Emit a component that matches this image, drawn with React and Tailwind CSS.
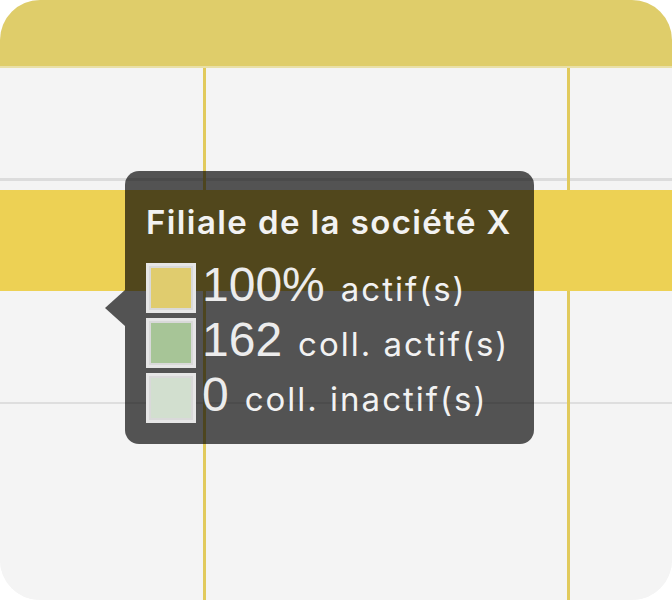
import React from "react";

function Cells({ h, bg = "bg-[#f4f4f4]" }) {
  return (
    <div className={`flex w-full ${h} ${bg}`}>
      <div className="w-[203px] shrink-0" />
      <div className="w-[3px] shrink-0 bg-[#e1ca5c]" />
      <div className="w-[361px] shrink-0" />
      <div className="w-[3px] shrink-0 bg-[#e1ca5c]" />
      <div className="flex-1" />
    </div>
  );
}

function LegendRow({ color, num, label }) {
  return (
    <div className="flex h-[50px] items-center">
      <div className="h-[50px] w-[50px] shrink-0 border-[3px] border-[#e6e6e6] p-[2px] bg-[#d9d9d9]">
        <div className={`h-full w-full ${color}`} />
      </div>
      <div className="-mt-[6px] ml-[6px] flex items-baseline">
        <span className="text-[48px] leading-none text-[#ececec]" style={{ fontFamily: '"Liberation Sans", Arial, sans-serif' }}>
          {num}
        </span>
        <span className="ml-[16px] text-[33px] leading-none tracking-[2px] text-[#f2f2f2]" style={{ fontFamily: 'Inter, "Noto Sans", sans-serif' }}>
          {label}
        </span>
      </div>
    </div>
  );
}

export default function App() {
  return (
    <div className="h-[600px] w-[672px] bg-white">
      <div className="relative h-[600px] w-[672px] overflow-hidden rounded-[40px] bg-[#f4f4f4]">
        <div className="h-[66px] bg-[#dfcd6a]" />
        <div className="h-[2px] bg-[#e9e0a8]" />
        <Cells h="h-[110px]" />
        <Cells h="h-[3px]" bg="bg-[#dcdcdc]" />
        <Cells h="h-[9px]" />
        <div className="h-[101px] bg-[#edd154]" />
        <Cells h="h-[111px]" />
        <Cells h="h-[2px]" bg="bg-[#dedede]" />
        <Cells h="h-[196px]" />

        <div className="absolute left-[125px] top-[171px] h-[273px] w-[409px] rounded-[14px] bg-[rgba(0,0,0,0.66)] pl-[21px] pt-[35px]">
          <div className="absolute left-[-20px] top-[119px] h-0 w-0 border-y-[18px] border-r-[20px] border-y-transparent border-r-[rgba(0,0,0,0.66)]" />
          <div className="text-[33px] font-semibold leading-none tracking-[1.4px] text-[#f2f2f2]" style={{ fontFamily: 'Inter, "Noto Sans", sans-serif' }}>
            Filiale de la société X
          </div>
          <div className="mt-[24px] flex flex-col gap-[5px]">
            <LegendRow color="bg-[#e0cc6e]" num="100%" label="actif(s)" />
            <LegendRow color="bg-[#a7c597]" num="162" label="coll. actif(s)" />
            <LegendRow color="bg-[#d2dfcf]" num="0" label="coll. inactif(s)" />
          </div>
        </div>
      </div>
    </div>
  );
}
